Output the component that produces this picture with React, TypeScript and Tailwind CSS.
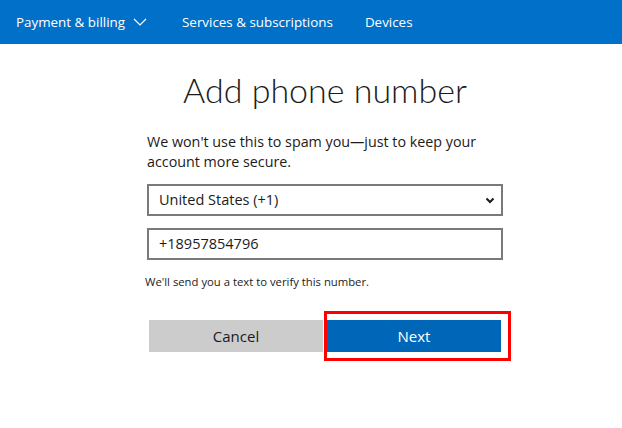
import React from "react";

export default function App() {
  const font = { fontFamily: '"Open Sans", "Noto Sans", sans-serif' };
  return (
    <div className="w-[622px] h-[428px] bg-white overflow-hidden" style={font}>
      <div className="h-[44px] bg-[#0070c8] flex items-center text-white text-[13.4px] pl-[16px]">
        <div className="flex items-center">
          <span>Payment &amp; billing</span>
          <svg width="14" height="8" viewBox="0 0 14 8" className="ml-[8px] mt-[1px]">
            <path d="M1 1 L7 7 L13 1" fill="none" stroke="white" strokeWidth="1.2" />
          </svg>
        </div>
        <span className="ml-[35px]">Services &amp; subscriptions</span>
        <span className="ml-[32px]">Devices</span>
      </div>
      <div className="ml-[147px] w-[356px] flex flex-col">
        <h1
          className="text-center font-light text-[34px] leading-[44px] text-[#1b1b1b] mt-[24px]"
          style={{ fontFamily: 'Lato, "Open Sans", sans-serif' }}
        >
          Add phone number
        </h1>
        <p className="mt-[20px] text-[14.3px] leading-[20px] text-[#1b1b1b]">
          We won't use this to spam you—just to keep your account more secure.
        </p>
        <div className="mt-[12px] h-[32px] border-2 border-[#7a7a7a] flex items-center justify-between pl-[10px] pr-[6px] text-[14.5px] text-[#1b1b1b]">
          <span>United States (+1)</span>
          <svg width="10" height="7" viewBox="0 0 10 7">
            <path d="M1.5 1.5 L5 5 L8.5 1.5" fill="none" stroke="#1b1b1b" strokeWidth="2" />
          </svg>
        </div>
        <div className="mt-[12px] h-[32px] border-2 border-[#7a7a7a] flex items-center pl-[10px] text-[14.5px] text-[#1b1b1b]">
          +18957854796
        </div>
        <p className="mt-[15px] ml-[-2px] text-[11.3px] leading-[14px] text-[#1b1b1b]">
          We'll send you a text to verify this number.
        </p>
        <div className="mt-[31px] mx-[2px] flex gap-[4px]">
          <button className="flex-1 h-[32px] bg-[#cccccc] text-[15px] text-[#1b1b1b]">Cancel</button>
          <div className="flex-1 relative">
            <button className="w-full h-[32px] bg-[#0067b8] text-[15px] text-white">Next</button>
            <div className="absolute left-[-3px] top-[-9px] right-[-10px] bottom-[-9px] border-[3px] border-[#ff0000] pointer-events-none" />
          </div>
        </div>
      </div>
    </div>
  );
}
